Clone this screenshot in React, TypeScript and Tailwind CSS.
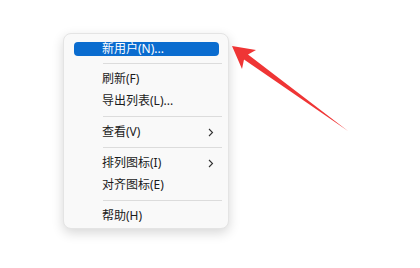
import React from "react";

type Item = { label: string; sub?: boolean; active?: boolean };

const groups: Item[][] = [
  [{ label: "新用户(N)...", active: true }],
  [{ label: "刷新(F)" }, { label: "导出列表(L)..." }],
  [{ label: "查看(V)", sub: true }],
  [{ label: "排列图标(I)", sub: true }, { label: "对齐图标(E)" }],
  [{ label: "帮助(H)" }],
];

function Chevron() {
  return (
    <svg width="6" height="9" viewBox="0 0 6 9" className="mr-[5px]">
      <path d="M1 1 L4.5 4.5 L1 8" fill="none" stroke="#333" strokeWidth="1.1" />
    </svg>
  );
}

function Row({ item }: { item: Item }) {
  return (
    <div className="h-[22px] flex items-center px-[9px] pl-[10px]">
      <div
        className={
          item.active
            ? "flex-1 h-[14px] mt-[1px] rounded-[4px] bg-[#0a6ccf] text-white flex items-center justify-between"
            : "flex-1 h-[14px] flex items-center justify-between text-[#1b1b1b]"
        }
      >
        <span className="pl-[28px] leading-none">{item.label}</span>
        {item.sub && <Chevron />}
      </div>
    </div>
  );
}

export default function App() {
  return (
    <div
      className="relative w-[420px] h-[268px] bg-white overflow-hidden pl-[63px] pt-[33px]"
      style={{ fontFamily: '"Noto Sans", "Noto Sans CJK SC", sans-serif' }}
    >
      <div className="w-[166px] rounded-[8px] bg-[#f9f9f9] border border-[#e4e4e4] shadow-[0_4px_12px_rgba(0,0,0,0.16)] pt-[3px] pb-[1px] text-[12px]">
        {groups.map((g, gi) => (
          <div key={gi}>
            {gi > 0 && (
              <div className="h-[9px] pt-[4px] pl-[39px] pr-[6px]">
                <div className="h-px bg-[#dcdcdc]" />
              </div>
            )}
            {g.map((it, i) => (
              <Row key={i} item={it} />
            ))}
          </div>
        ))}
      </div>
      <svg
        className="absolute left-0 top-0 pointer-events-none"
        width="420"
        height="268"
        viewBox="0 0 420 268"
      >
        <polygon
          points="232,46 256,50 248,54.5 348,131 244,59.5 242,69"
          fill="#ef3535"
        />
      </svg>
    </div>
  );
}
